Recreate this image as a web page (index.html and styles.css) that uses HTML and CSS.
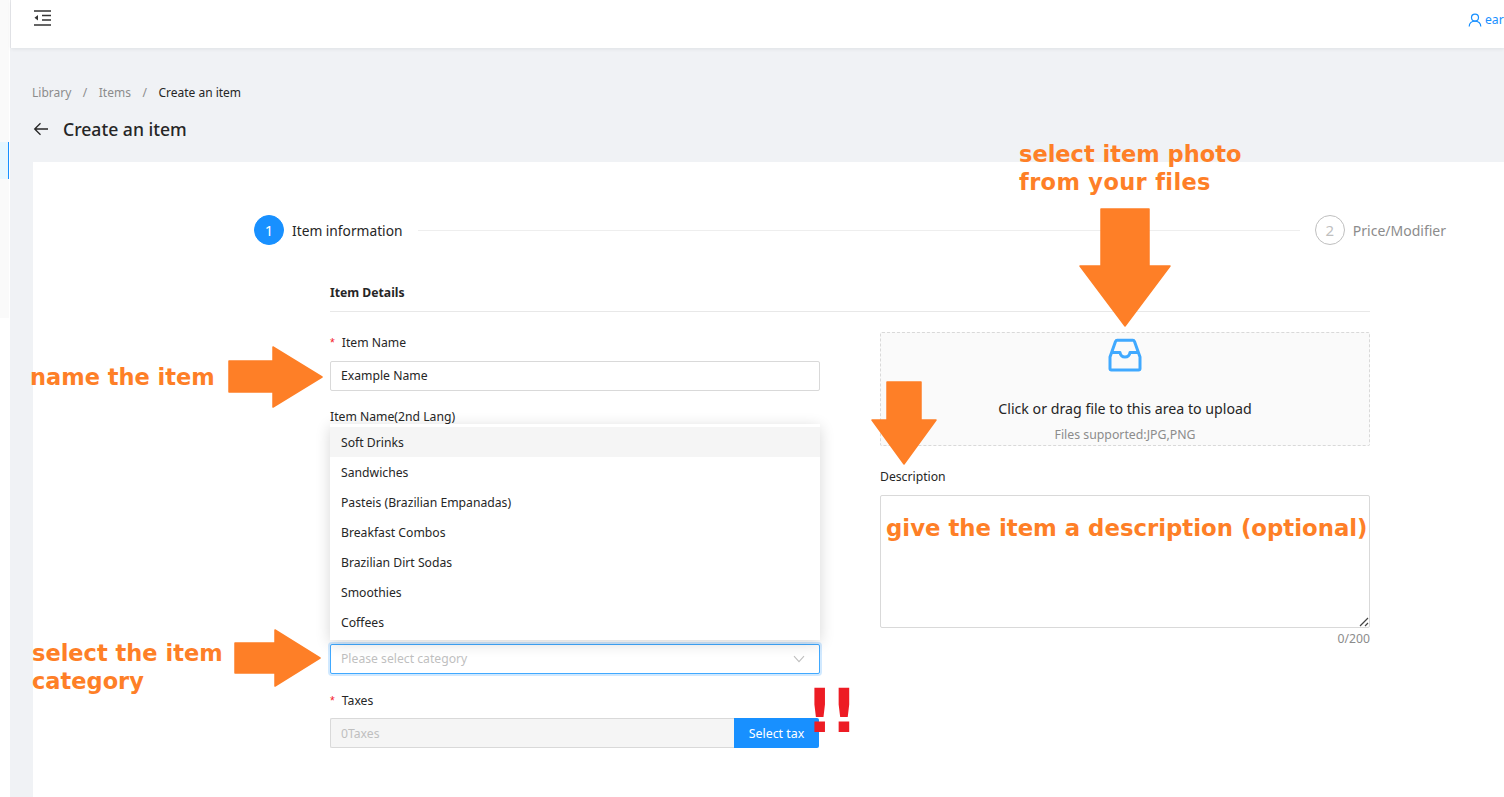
FILE: index.html
```html
<!DOCTYPE html>
<html lang="en">
<head>
<meta charset="utf-8">
<title>Create an item</title>
<link rel="stylesheet" href="styles.css">
</head>
<body>
<div class="app">
  <aside class="sider">
    <div class="sider-menu"><div class="sider-active"></div></div>
  </aside>
  <div class="main">
    <header class="topbar">
      <svg class="menu-icon" width="17" height="16" viewBox="0 0 17 16"><path d="M0 1h17M8 5.500h9M8 10h9M0 15h17" stroke="#333" stroke-width="1.700" fill="none"/><path d="M0.500 7.700 4 5v5.400z" fill="#333"/></svg>
      <div class="user">
        <svg width="14" height="14" viewBox="0 0 14 14"><circle cx="7" cy="4.600" r="3.500" fill="none" stroke="#1890ff" stroke-width="1.200"/><path d="M1.200 13.400c0-3.200 2.600-5.300 5.800-5.300s5.800 2.100 5.800 5.300" fill="none" stroke="#1890ff" stroke-width="1.200"/></svg>
        <span>ear</span>
      </div>
    </header>
    <div class="content">
      <nav class="crumbs"><span class="crumb">Library</span><span class="sep">/</span><span class="crumb">Items</span><span class="sep">/</span><span class="crumb-now">Create an item</span></nav>
      <div class="page-title">
        <svg width="16" height="16" viewBox="0 0 16 16"><path d="M15 8H2M7.500 2.200 1.700 8l5.800 5.800" fill="none" stroke="#262626" stroke-width="1.300"/></svg>
        <h1>Create an item</h1>
      </div>
      <main class="card">
        <div class="steps">
          <div class="step"><span class="step-dot active">1</span><span class="step-label first">Item information</span></div>
          <div class="step-line"></div>
          <div class="step"><span class="step-dot">2</span><span class="step-label muted">Price/Modifier</span></div>
        </div>
        <section class="form-wrap">
          <h2 class="section-title">Item Details</h2>
          <div class="form-cols">
            <div class="col">
              <div class="field">
                <label class="label"><i class="req">*</i>Item Name</label>
                <div class="input">Example Name</div>
              </div>
              <div class="field covered-field">
                <label class="label">Item Name(2nd Lang)</label>
                <div class="covered">
                  <ul class="dropdown">
                    <li class="option selected">Soft Drinks</li>
                    <li class="option">Sandwiches</li>
                    <li class="option">Pasteis (Brazilian Empanadas)</li>
                    <li class="option">Breakfast Combos</li>
                    <li class="option">Brazilian Dirt Sodas</li>
                    <li class="option">Smoothies</li>
                    <li class="option">Coffees</li>
                  </ul>
                </div>
              </div>
              <div class="field">
                <div class="input select"><span class="placeholder">Please select category</span>
                  <svg width="12" height="8" viewBox="0 0 12 8"><path d="M1 1.200 6 6.600l5-5.400" fill="none" stroke="#bfbfbf" stroke-width="1.100"/></svg>
                </div>
              </div>
              <div class="field">
                <label class="label label-low"><i class="req">*</i>Taxes</label>
                <div class="tax-group"><div class="input disabled">0Taxes</div><button class="btn">Select tax</button></div>
              </div>
            </div>
            <div class="col">
              <div class="upload">
                <svg class="upload-icon" width="34" height="34" viewBox="0 0 34 34"><path d="M2 19 7.500 3.500a2 2 0 0 1 1.700-1.200h15.600a2 2 0 0 1 1.700 1.200L32 19v11.500a1.500 1.500 0 0 1-1.500 1.500h-27A1.500 1.500 0 0 1 2 30.500zM2.500 14.500h9.500c.5 3 2.300 4.500 5 4.500s4.500-1.500 5-4.500h9.500" fill="none" stroke="#40a9ff" stroke-width="3" stroke-linejoin="round"/></svg>
                <p class="upload-text">Click or drag file to this area to upload</p>
                <p class="upload-hint">Files supported:JPG,PNG</p>
              </div>
              <label class="label desc-label">Description</label>
              <div class="textarea"><svg class="grip" width="10" height="10" viewBox="0 0 10 10"><path d="M1 9 9 1M6 9l3-3" stroke="#444" stroke-width="1.200"/></svg></div>
              <div class="count">0/200</div>
            </div>
          </div>
        </section>
      </main>
    </div>
  </div>
</div>

<div class="note n-photo">select item photo<br><span class="wide">from your files</span></div>
<div class="note n-name">name the item</div>
<div class="note n-cat">select the item<br>category</div>
<div class="note n-desc">give the item a description (optional)</div>
<div class="bang">!!</div>

<svg class="arrow a-photo" width="92" height="120" viewBox="0 0 92 120"><path d="M22 1h48v57h21L46 118 1 58h21z" fill="#fe7f27" stroke="#fe7f27" stroke-width="1.500" stroke-linejoin="round"/></svg>
<svg class="arrow a-desc" width="66" height="84" viewBox="0 0 66 84"><path d="M16 1h34v38h15L33 83 1 39h15z" fill="#fe7f27" stroke="#fe7f27" stroke-width="1.500" stroke-linejoin="round"/></svg>
<svg class="arrow a-name" width="95" height="62" viewBox="0 0 95 62"><path d="M1 15h44V1l49 30-49 30V46H1z" fill="#fe7f27" stroke="#fe7f27" stroke-width="1.500" stroke-linejoin="round"/></svg>
<svg class="arrow a-cat" width="87" height="58" viewBox="0 0 87 58"><path d="M1 14h40V1l45 28-45 28V44H1z" fill="#fe7f27" stroke="#fe7f27" stroke-width="1.500" stroke-linejoin="round"/></svg>
</body>
</html>
```

FILE: styles.css
```css
* { box-sizing: border-box; }
html, body { margin: 0; height: 797px; overflow: hidden; }
body {
  font-family: "Noto Sans", "Open Sans", sans-serif;
  font-size: 12.2px;
  color: #262626;
  background: #fff;
  position: relative;
}
.app { display: flex; height: 797px; }
.sider { width: 10px; flex: none; background: #fff; }
.sider-menu { width: 9px; height: 318px; background: #fafafa; padding-top: 142px; }
.sider-active { height: 37px; background: #e6f7ff; border-right: 1px solid #1890ff; }
.main { flex: 1; min-width: 0; display: flex; flex-direction: column; box-shadow: inset 1px 0 0 #e8e9ec; }
.topbar {
  height: 48px; flex: none; background: #fff;
  margin-left: 1px;
  display: flex; align-items: flex-start; justify-content: space-between;
  padding: 10px 0 0 23px;
  box-shadow: 0 1px 4px rgba(0, 21, 41, .08);
  position: relative;
}
.user { display: flex; align-items: center; gap: 3px; color: #1890ff; padding: 1px 0 0; width: 36px; overflow: hidden; white-space: nowrap; }
.user svg { flex: none; }
.content { flex: 1; min-height: 0; background: #f0f2f5; padding: 35px 0 0 23px; display: flex; flex-direction: column; }
.crumbs { display: flex; height: 18px; align-items: center; color: #8c8c8c; margin-left: -1px; font-size: 12px; }
.sep { margin: 0 11.5px; }
.crumb-now { color: #262626; }
.page-title { display: flex; align-items: center; gap: 14px; height: 26px; margin-top: 15px; }
.page-title h1 { margin: 0; font-size: 17.600px; font-weight: 500; color: #262626; }
.card { flex: 1; background: #fff; margin-top: 20px; padding: 53px 58px 0 221px; }
.steps { display: flex; align-items: center; height: 30px; }
.step { display: flex; align-items: center; gap: 8px; flex: none; }
.step-dot {
  width: 30px; height: 30px; border-radius: 50%; border: 1px solid #bfbfbf; color: #bfbfbf;
  display: flex; align-items: center; justify-content: center; font-size: 15px;
}
.step-dot.active { background: #1890ff; border-color: #1890ff; color: #fff; }
.step-label { font-size: 14px; color: #262626; }
.step-label.first { font-size: 13.750px; width: 111px; }
.step-label.muted { color: #8c8c8c; }
.step-line { flex: 1; height: 1px; background: #eee; margin: 0 15px; }
.form-wrap { width: 1040px; margin: 0 0 0 76px; padding-top: 37px; }
.section-title { margin: 0; font-size: 12.200px; font-weight: 700; height: 30px; padding-top: 1px; line-height: 20px; border-bottom: 1px solid #e8e8e8; color: #262626; }
.form-cols { display: flex; justify-content: space-between; padding-top: 19px; }
.col { width: 490px; }
.field { margin-bottom: 14px; }
.covered-field { margin-bottom: 0; }
.label { display: block; height: 22px; line-height: 24px; margin-bottom: 8px; color: #262626; }
.label-low { line-height: 26px; }
.covered-field .label { margin-bottom: 0; }
.req { font-style: normal; color: #f5222d; margin-right: 7px; font-family: "Liberation Sans", sans-serif; }
.input { height: 30px; border: 1px solid #d9d9d9; border-radius: 2px; padding: 0 10px; line-height: 28px; color: #262626; background: #fff; }
.covered { height: 217px; position: relative; }
.dropdown {
  position: absolute; top: -3px; left: 0; width: 490px; margin: 0; padding: 3px 0; list-style: none; background: #fff;
  box-shadow: 0 3px 14px rgba(0, 0, 0, .16); z-index: 5;
}
.option { height: 30px; line-height: 32px; padding: 0 11px; color: #262626; }
.option.selected { background: #f5f5f5; }
.select { display: flex; align-items: center; justify-content: space-between; border-color: #40a9ff; box-shadow: 0 0 0 2px rgba(24, 144, 255, .2); padding-right: 14px; }
.placeholder { color: #bfbfbf; line-height: 30px; }
.tax-group { display: flex; width: 489px; height: 30px; }
.disabled { flex: 1; background: #f5f5f5; color: #bfbfbf; border-right: 0; border-radius: 2px 0 0 2px; line-height: 30px; }
.btn { width: 85px; height: 30px; background: #1890ff; color: #fff; border: 0; border-radius: 0 2px 2px 0; font: inherit; font-size: 12.400px; padding: 0; }
.upload { margin-top: 1px; height: 114px; border: 1px dashed #d9d9d9; background: #fafafa; text-align: center; padding-top: 5px; border-radius: 2px; }
.upload-icon { display: block; margin: 0 auto; }
.upload-text { margin: 26px 0 0; font-size: 14.200px; line-height: 22px; color: #262626; }
.upload-hint { margin: 6px 0 0; font-size: 12.300px; line-height: 18px; color: #8c8c8c; }
.desc-label { margin-top: 19px; }
.textarea { height: 133px; border: 1px solid #d9d9d9; border-radius: 2px; position: relative; }
.grip { position: absolute; right: 0; bottom: 0; }
.count { text-align: right; color: #8c8c8c; padding-top: 1px; line-height: 20px; }

.note { position: absolute; z-index: 10; font-family: "DejaVu Sans", sans-serif; font-weight: 700; font-size: 22.500px; line-height: 28px; color: #fe7f27; white-space: nowrap; }
.wide { letter-spacing: .35px; }
.n-photo { left: 1019px; top: 140px; }
.n-name { left: 30px; top: 363px; }
.n-cat { left: 32px; top: 639px; }
.n-desc { left: 886px; top: 514px; font-size: 22.800px; }
.bang { position: absolute; z-index: 10; left: 806px; top: 676px; font-family: "DejaVu Sans", sans-serif; font-weight: 700; font-size: 60px; line-height: 70px; letter-spacing: -3px; color: #ed1c24; }
.arrow { position: absolute; z-index: 9; }
.a-photo { left: 1079px; top: 208px; }
.a-desc { left: 871px; top: 381px; }
.a-name { left: 228px; top: 346px; }
.a-cat { left: 234px; top: 629px; }
```
